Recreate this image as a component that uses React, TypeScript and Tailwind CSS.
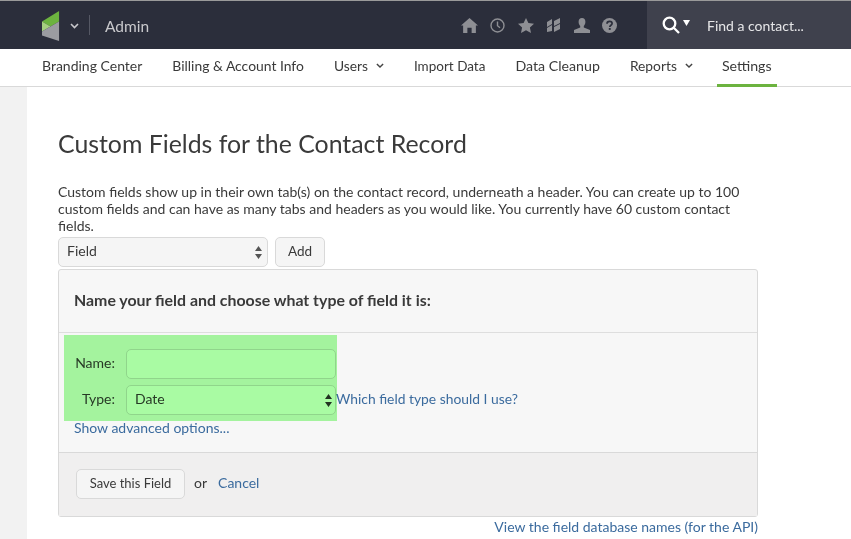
import React from "react";

const Chev = ({ c = "#555", w = 9 }: { c?: string; w?: number }) => (
  <svg width={w} height={w * 0.67} viewBox="0 0 9 6" fill="none"><path d="M1 1l3.5 3.5L8 1" stroke={c} strokeWidth="1.6" /></svg>
);
const Updown = ({ c = "#555" }: { c?: string }) => (
  <svg width="7" height="13" viewBox="0 0 7 13" fill={c}><path d="M3.5 0L7 5H0zM3.5 13L0 8h7z" /></svg>
);

export default function App() {
  return (
    <div className="relative w-[851px] h-[539px] overflow-hidden bg-white text-[#3a3a3a] text-[14px] font-['Lato','Liberation_Sans',sans-serif]">
      <div className="h-px bg-[#9a9a9a]" />
      <header className="flex h-[48px] bg-[#2b2e3b]">
        <div className="flex items-center pl-[42px] w-[647px]">
          <svg width="18" height="30" viewBox="0 0 19 30" className="mt-px" preserveAspectRatio="none">
            <path d="M0 10.5L18 0v10.5L9 15.5 0 10.5z" fill="#6cb33f" />
            <path d="M0 10.5l9 5-9 5z" fill="#a5d07f" />
            <path d="M9 15.5l9-5V30L0 24.5v-4z" fill="#9b9ca1" />
          </svg>
          <span className="ml-[10px] mt-[2px]"><Chev c="#c8c8cc" /></span>
          <span className="ml-[10px] h-[20px] w-px bg-[#555864]" />
          <span className="ml-[15px] mt-[3px] text-[15.5px] text-[#c9c9cc]">Admin</span>
          <div className="ml-auto mr-[30px] flex items-center gap-[12.5px]">
            <svg width="17" height="15" viewBox="0 0 16 14" fill="#8e8f94"><path d="M8 0l8 7h-2v7h-4V9H6v5H2V7H0z" /></svg>
            <svg width="15" height="15" viewBox="0 0 15 15" fill="none" stroke="#8e8f94" strokeWidth="1.4"><circle cx="7.5" cy="7.5" r="6.5" /><path d="M7.5 3.5v4.2l2.5 2" /></svg>
            <svg width="16" height="15" viewBox="0 0 16 15" fill="#8e8f94"><path d="M8 0l2.4 5 5.6.7-4.1 3.8 1.1 5.5L8 12.3 3 15l1.1-5.5L0 5.7 5.6 5z" /></svg>
            <svg width="15" height="14" viewBox="0 0 15 14" fill="#8e8f94"><path d="M1 4l5-3v5L1 9zM8 3l6-3v5L8 8zM1 10l5-3v6l-5 1zM8 9l6-3v5l-6 3z" /></svg>
            <svg width="16" height="15" viewBox="0 0 16 15" fill="#8e8f94"><path d="M8 0c2.2 0 3.4 1.6 3.4 3.8 0 2-.8 3.4-1.6 4.2v1.5L16 12v3H0v-3l6.2-2.5V8C5.4 7.2 4.6 5.8 4.6 3.8 4.6 1.6 5.8 0 8 0z" /></svg>
            <svg width="15" height="15" viewBox="0 0 15 15"><circle cx="7.5" cy="7.5" r="7.5" fill="#8e8f94" /><path d="M5 5.7c0-1.5 1.1-2.4 2.6-2.4s2.5.9 2.5 2.1c0 1.8-2.3 1.8-2.3 3.5" fill="none" stroke="#2b2e3b" strokeWidth="1.7" /><rect x="6.8" y="10" width="1.9" height="1.9" fill="#2b2e3b" /></svg>
          </div>
        </div>
        <div className="flex flex-1 items-center bg-[#3f414d] pl-[15px]">
          <svg width="18" height="18" viewBox="0 0 18 18" fill="none" stroke="#fff" strokeWidth="2.3"><circle cx="7.5" cy="7.5" r="5.8" /><path d="M11.5 11.5l5.5 5.5" /></svg>
          <svg width="7" height="6" viewBox="0 0 7 6" fill="#fff" className="ml-[3px] mb-[5px]"><path d="M0 0h7L3.5 6z" /></svg>
          <span className="ml-[17px] text-[14px] text-[#e6e6e8]">Find a contact...</span>
        </div>
      </header>
      <nav className="flex h-[38px] items-stretch gap-[30px] border-b border-[#d9d9d9] pl-[42px] text-[13.8px] leading-[20px]">
        <span className="pt-[7px] text-[14px]">Branding Center</span>
        <span className="pt-[7px] text-[13.9px]">Billing &amp; Account Info</span>
        <span className="flex items-start gap-[8px] pt-[7px]">Users <span className="mt-[7px]"><Chev c="#444" w={8} /></span></span>
        <span className="pt-[7px] text-[13.5px]">Import Data</span>
        <span className="pt-[7px] text-[14.2px]">Data Cleanup</span>
        <span className="flex items-start gap-[8px] pt-[7px]">Reports <span className="mt-[7px]"><Chev c="#444" w={8} /></span></span>
        <span className="-ml-[6px] -mb-px border-b-[3px] border-[#6cb33f] px-[5px] pt-[7px] text-[14.2px]">Settings</span>
      </nav>
      <div className="flex">
        <aside className="h-[452px] w-[27px] shrink-0 bg-[#f2f2f2]" />
        <main className="w-[731px] pl-[31px]">
          <h1 className="mt-[40px] text-[24.85px] leading-[32px] text-[#3a3a3a]">Custom Fields for the Contact Record</h1>
          <p className="mt-[24px] w-[690px] text-[14px] leading-[17px]">
            Custom fields show up in their own tab(s) on the contact record, underneath a header. You can create up to 100 custom fields and can have as many tabs and headers as you would like. You currently have 60 custom contact fields.
          </p>
          <div className="mt-[3px] flex gap-[7px]">
            <div className="flex h-[30px] w-[210px] items-center justify-between rounded-[5px] border border-[#d9d9d9] bg-[#f5f5f5] pl-[8px] pr-[5px]">
              <span className="pb-[3px]">Field</span><Updown />
            </div>
            <div className="flex h-[30px] w-[50px] items-center justify-center rounded-[5px] border border-[#d9d9d9] bg-[#f5f5f5] pb-[1px] text-[13.5px]">Add</div>
          </div>
          <section className="mt-[2px] w-[700px] rounded-[3px] border border-[#d9d9d9] bg-[#f7f7f7]">
            <h2 className="flex h-[63px] items-center border-b border-[#dedede] pb-[2px] pl-[15px] text-[15.9px] font-bold text-[#3a3a3a]">Name your field and choose what type of field it is:</h2>
            <div className="h-[120px] border-b border-[#d9d9d9] pl-[15px] pt-[16px]">
              <div className="flex items-center">
                <span className="w-[41px] pb-[3px] text-right">Name:</span>
                <div className="ml-[11px] h-[30px] w-[210px] rounded-[5px] border border-[#d9d9d9] bg-white" />
              </div>
              <div className="mt-[6px] flex items-center">
                <span className="w-[41px] pb-[3px] text-right">Type:</span>
                <div className="ml-[11px] flex h-[30px] w-[210px] items-center justify-between rounded-[5px] border border-[#d9d9d9] bg-white pl-[8px] pr-[3px]">
                  <span className="pb-[3px]">Date</span><Updown c="#333" />
                </div>
                <span className="pb-[1px] text-[13.85px] text-[#3b6b9e]">Which field type should I use?</span>
              </div>
              <div className="mt-[2px] text-[#3b6b9e]">Show advanced options...</div>
            </div>
            <div className="flex h-[63px] items-center bg-[#f0efef] pb-[2px] pl-[17px]">
              <div className="flex h-[30px] w-[109px] items-center justify-center rounded-[5px] border border-[#d9d9d9] bg-[#f5f5f5] text-[13px]">Save this Field</div>
              <span className="ml-[9px] pb-[2px]">or</span>
              <span className="ml-[11px] pb-[2px] text-[#3b6b9e]">Cancel</span>
            </div>
          </section>
          <div className="mt-[1px] text-right leading-[17px] text-[#3b6b9e]">View the field database names (for the API)</div>
        </main>
      </div>
      <div className="absolute left-[64px] top-[335px] h-[86px] w-[273px] bg-[#a9fba3] mix-blend-multiply" />
    </div>
  );
}
